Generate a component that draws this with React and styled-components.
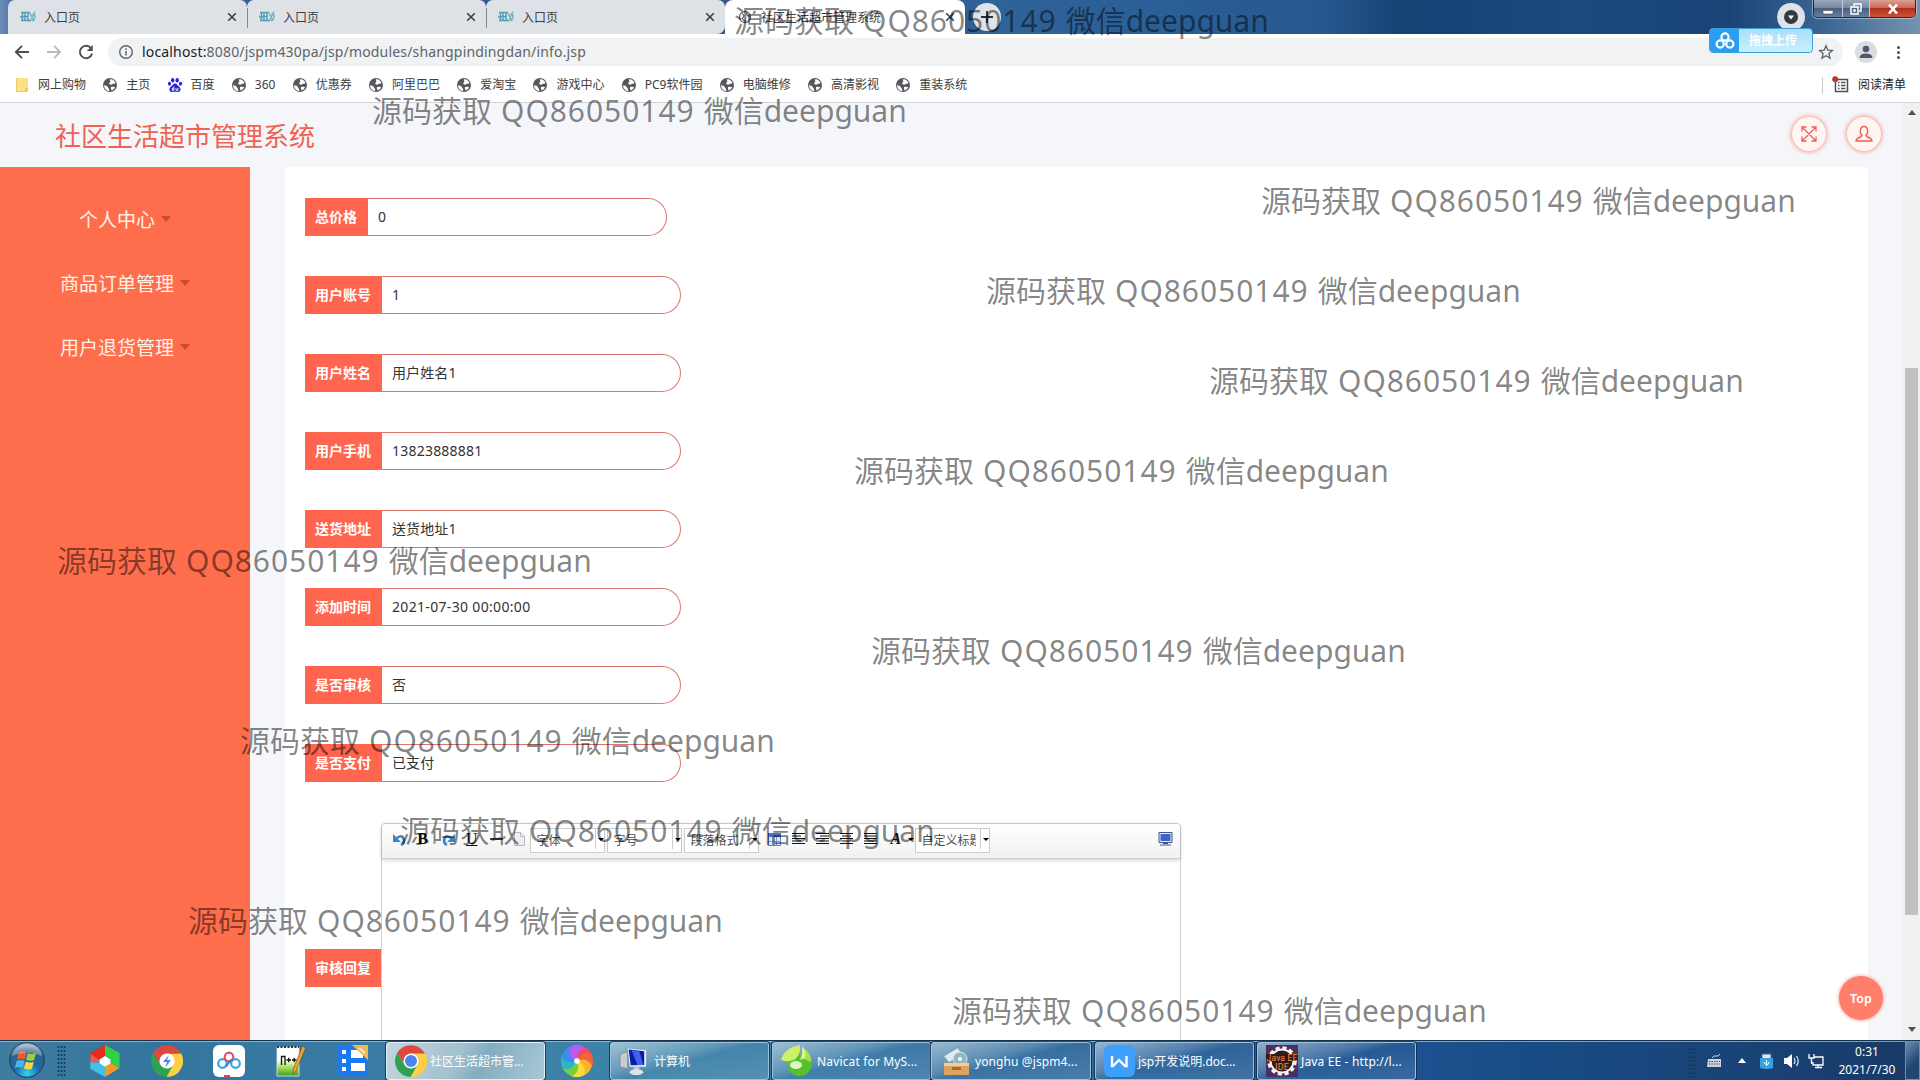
import React from "react";
import styled, { createGlobalStyle, css } from "styled-components";

const Global = createGlobalStyle`
  * { box-sizing: border-box; }
  html, body { margin: 0; padding: 0; overflow: hidden; }
  body { font-family: "Noto Sans", "Noto Sans CJK SC", sans-serif; font-size: 14px; color: #333; }
  svg { display: block; flex: none; }
`;

const Screen = styled.div`
  position: relative;
  width: 1920px;
  height: 1080px;
  overflow: hidden;
  display: flex;
  flex-direction: column;
  background: #fff;
`;

/* ---------- browser chrome ---------- */
const TabStrip = styled.div`
  height: 34px;
  flex: none;
  display: flex;
  padding-left: 8px;
  background: linear-gradient(90deg, #6d8db6 0, #3b6299 1%, #35568f 40%, #2f6296 52%, #2a5f97 60%, #27588f 69%, #164274 73%, #1a4a7f 82%, #1b4376 90%, #3a6692 95%, #7593ae 100%);
`;
const Tab = styled.div`
  width: ${(p) => (p.$active ? 240 : 239)}px;
  height: 34px;
  display: flex;
  align-items: center;
  padding: 0 10px 0 12px;
  gap: 8px;
  font-size: 12px;
  color: #3c4043;
  white-space: nowrap;
  background: ${(p) => (p.$active ? "#fff" : "#dee1e6")};
  border-radius: ${(p) => (p.$active ? "8px 8px 0 0" : "7px 7px 0 0")};
  ${(p) => p.$last && css`border-radius: 7px 7px 8px 0;`}
`;
const TabTitle = styled.span`
  flex: 1;
  line-height: 34px;
  padding-top: 1px;
`;
const TabDivider = styled.div`
  width: 1px;
  height: 20px;
  margin: 8px -1px 0 0;
  background: #85898f;
  z-index: 1;
`;
const NewTab = styled.div`
  width: 28px;
  height: 28px;
  margin: 3px 0 0 8px;
  border-radius: 50%;
  background: #dee3ea;
  display: flex;
  align-items: center;
  justify-content: center;
`;
const StripEnd = styled.div`
  margin-left: auto;
  display: flex;
  padding-right: 4px;
`;
const TabSearch = styled(NewTab)`
  margin: 3px 8px 0 0;
`;
const WindowButtons = styled.div`
  display: flex;
  height: 18px;
  border: 1px solid #1d2c42;
  border-top: 0;
  border-radius: 0 0 5px 5px;
  overflow: hidden;
  box-shadow: 0 0 1px 1px rgba(255,255,255,.45);
`;
const WindowButton = styled.div`
  width: ${(p) => p.$w}px;
  display: flex;
  align-items: center;
  justify-content: center;
  border-left: ${(p) => (p.$first ? "0" : "1px solid #c3ccd8")};
  background: ${(p) =>
    p.$close
      ? "linear-gradient(#d9a094 0, #cb6a58 45%, #b1301d 50%, #c9543a 100%)"
      : "linear-gradient(#9aa9bc 0, #7588a2 45%, #4a6080 50%, #67809f 100%)"};
`;
const Toolbar = styled.div`
  height: 35px;
  flex: none;
  display: flex;
  align-items: center;
  padding: 1px 0 0 14px;
  background: #fff;
`;
const NavIcons = styled.div`
  display: flex;
  gap: 16px;
  width: 94px;
`;
const AddressBar = styled.div`
  width: 1735px;
  height: 28px;
  border-radius: 14px;
  background: #f0f2f4;
  display: flex;
  align-items: center;
  padding: 0 9px 0 10px;
  gap: 8px;
`;
const Url = styled.span`
  flex: 1;
  font-size: 14px;
  line-height: 28px;
  color: #5f6368;
  letter-spacing: 0.17px;
  b { font-weight: 400; color: #202124; }
`;
const Avatar = styled.div`
  width: 22px;
  height: 22px;
  margin-left: 12px;
  border-radius: 50%;
  background: #dadee4;
  overflow: hidden;
`;
const Dots = styled.div`
  width: 3px;
  margin-left: 20px;
  display: grid;
  gap: 2px;
  i { width: 3px; height: 3px; border-radius: 50%; background: #4b4f54; }
`;
const Bookmarks = styled.div`
  height: 34px;
  flex: none;
  display: flex;
  align-items: center;
  gap: 16.25px;
  padding: 0 14px 1px 14px;
  font-size: 12px;
  color: #3c4043;
  background: #fff;
  border-bottom: 1px solid #d3d5d9;
`;
const Bookmark = styled.div`
  display: flex;
  align-items: center;
  gap: 8px;
  white-space: nowrap;
  line-height: 18px;
`;
const ReadingList = styled(Bookmark)`
  margin-left: auto;
  border-left: 1px solid #c8cbd0;
  padding-left: 9px;
  height: 17px;
  color: #222;
`;
const UploadBadge = styled.div`
  position: absolute;
  left: 1709px;
  top: 28px;
  width: 104px;
  height: 25px;
  display: flex;
  border: 1px solid #3f9fd8;
  border-radius: 4px;
  overflow: hidden;
  background: linear-gradient(#a9dff9, #c8f1fd);
  color: #fff;
  font-size: 12px;
  font-weight: 700;
  line-height: 23px;
`;
const UploadIcon = styled.div`
  width: 29px;
  background: #2b9df4;
  display: flex;
  align-items: center;
  justify-content: center;
  margin-right: 10px;
`;

/* ---------- page ---------- */
const Page = styled.div`
  height: 937px;
  flex: none;
  display: flex;
  background: #f4f6fa;
`;
const PageMain = styled.div`
  width: 1903px;
  display: flex;
  flex-direction: column;
`;
const PageHeader = styled.header`
  height: 64px;
  display: flex;
  align-items: center;
  padding: 0 22px 0 55px;
  gap: 21px;
`;
const SiteTitle = styled.h1`
  margin: 1px auto 0 0;
  font-size: 26px;
  font-weight: 400;
  line-height: 40px;
  color: #ef6353;
`;
const RoundButton = styled.div`
  width: 34px;
  height: 34px;
  margin-top: -2px;
  border-radius: 50%;
  background: #fff6f3;
  box-shadow: 0 0 4px 1px #fb9c8f;
  display: flex;
  align-items: center;
  justify-content: center;
`;
const Body = styled.div`
  height: 873px;
  display: flex;
`;
const Sidebar = styled.nav`
  width: 250px;
  background: #ff6e4c;
  padding-top: 21px;
`;
const MenuItem = styled.div`
  height: 64px;
  display: flex;
  align-items: center;
  justify-content: center;
  gap: 6px;
  font-size: 19px;
  line-height: 64px;
  color: #fff3ea;
`;
const MenuCaret = styled.i`
  margin-top: -2px;
  border: 5.5px solid transparent;
  border-top: 6px solid #c4502f;
  border-bottom: 0;
`;
const Card = styled.main`
  width: 1583px;
  margin-left: 35px;
  background: #fff;
  padding: 31px 0 0 20px;
  overflow: hidden;
`;
const Gutter = styled.div`
  flex: 1;
  background: #f4f6fa;
`;
const Field = styled.div`
  display: flex;
  height: 38px;
  margin-bottom: 40px;
`;
const Label = styled.div`
  height: 38px;
  padding: 0 ${(p) => (p.$tight ? 10 : 11)}px 0 10px;
  font-size: 14px;
  font-weight: 700;
  line-height: 37px;
  color: #fff;
  background: #ff654f;
  white-space: nowrap;
`;
const Value = styled.div`
  width: 299px;
  height: 38px;
  padding-left: 10px;
  border: 1px solid #d9776d;
  border-left: 0;
  border-radius: 0 20px 20px 0;
  line-height: 36px;
  color: #333;
  letter-spacing: ${(p) => p.$ls}px;
`;
const EditorField = styled.div`
  display: flex;
  align-items: center;
  height: 293px;
  margin-top: -1px;
`;
const Editor = styled.div`
  width: 800px;
  height: 291px;
  margin-top: 2px;
  border: 1px solid #d0d0d0;
  border-radius: 4px 4px 0 0;
  background: #fff;
`;
const EditorBar = styled.div`
  height: 35px;
  display: flex;
  align-items: flex-start;
  padding: 4px 7px 0 10px;
  border-bottom: 1px solid #cfcfcf;
  border-radius: 4px 4px 0 0;
  background: linear-gradient(#fff, #f1f1f1);
  box-shadow: 0 1px 4px rgba(0,0,0,.2);
`;
const Tool = styled.div`
  width: ${(p) => p.$w || 24.3}px;
  height: 22px;
  display: flex;
  align-items: center;
  padding-left: 1px;
  font: ${(p) => p.$font || "700 16px 'Liberation Serif', serif"};
  color: #111;
  text-decoration: ${(p) => (p.$under ? "underline" : "none")};
`;
const ScreenTool = styled(Tool)`
  margin-left: auto;
  padding-left: 9px;
`;
const Combo = styled.div`
  width: 75px;
  height: 25px;
  margin-right: 2px;
  padding-left: 5px;
  display: flex;
  flex: none;
  border: 1px solid #ccc;
  background: #fff;
  font-size: 12px;
  line-height: 23px;
  color: #4d4d4d;
  white-space: nowrap;
`;
const ComboText = styled.span`
  width: 55px;
  margin-right: 4px;
  overflow: hidden;
`;
const ComboArrow = styled.span`
  height: 20px;
  width: 9px;
  border-left: 1px solid #ccc;
  display: flex;
  align-items: center;
  padding-left: 2px;
`;
const SmallCaret = styled.i`
  border: 3px solid transparent;
  border-top: 3.5px solid #000;
  border-bottom: 0;
`;
const ScrollTrack = styled.div`
  width: 17px;
  display: flex;
  flex-direction: column;
  align-items: center;
  justify-content: space-between;
  padding: 7px 0 8px;
  background: #f1f1f1;
`;
const ScrollArrow = styled.i`
  border: 4px solid transparent;
  ${(p) =>
    p.$down
      ? css`border-top: 5px solid #505050; border-bottom: 0;`
      : css`border-bottom: 5px solid #505050; border-top: 0;`}
`;
const ScrollThumb = styled.div`
  width: 13px;
  height: 547px;
  margin-bottom: auto;
  margin-top: 253px;
  background: #c1c1c1;
`;
const TopButton = styled.div`
  position: absolute;
  left: 1839px;
  top: 976px;
  width: 44px;
  height: 44px;
  border-radius: 50%;
  background: #ff7e6c;
  box-shadow: 0 0 3px 1px #ffb9ad;
  color: #fff;
  font-size: 12.5px;
  font-weight: 600;
  line-height: 45px;
  text-align: center;
`;

/* ---------- taskbar ---------- */
const Taskbar = styled.footer`
  height: 40px;
  flex: none;
  display: flex;
  border-top: 1px solid #17324c;
  box-shadow: inset 0 1px 0 rgba(190,220,235,.6);
  background: linear-gradient(90deg, #3f7d9f 0, #33759d 8%, #3a7ba5 18%, #3e84a8 35%, #3777a5 45%, #2a6299 60%, #1b5290 73%, #184a83 82%, #1a4274 92%, #173a66 100%);
`;
const Orb = styled.div`
  width: 57px;
  padding: 1px 0 0 9px;
`;
const Grip = styled.div`
  width: 9px;
  height: 32px;
  margin-top: 4px;
  background: radial-gradient(circle, #173a58 0.9px, transparent 1.2px) 0 0 / 3px 4px;
`;
const Pins = styled.div`
  width: 320px;
  display: flex;
  align-items: center;
  gap: 30px;
  padding-left: 23px;
`;
const TaskSlot = styled.div`
  width: 65px;
  display: flex;
  align-items: center;
  justify-content: center;
  padding-right: 2px;
`;
const TaskButton = styled.div`
  width: ${(p) => p.$w || 159}px;
  height: 38px;
  margin: 1px ${(p) => p.$gap ?? 3}px 0 0;
  padding-left: ${(p) => p.$pad ?? 8}px;
  display: flex;
  align-items: center;
  gap: ${(p) => p.$space ?? 4}px;
  font-size: 12px;
  line-height: 35px;
  color: #fff;
  white-space: nowrap;
  letter-spacing: ${(p) => p.$ls || 0}px;
  border: 1px solid ${(p) => (p.$active ? "#e2eff5" : "#9cc0d8")};
  border-radius: 3px;
  box-shadow: 0 0 0 1px rgba(12,38,66,.75);
  background: ${(p) =>
    p.$active
      ? "linear-gradient(115deg, #c5d6df 0, #a2c0ce 45%, #83adbf 60%, #a8c8d6 100%)"
      : "linear-gradient(165deg, rgba(255,255,255,.5) 0, rgba(255,255,255,.2) 38%, rgba(255,255,255,.04) 50%, rgba(255,255,255,.14) 100%)"};
`;
const Tray = styled.div`
  margin-left: auto;
  display: flex;
  align-items: center;
`;
const TrayIcons = styled.div`
  display: flex;
  align-items: center;
  width: 140px;
  padding-left: 9px;
  gap: 11px;
  svg:nth-child(2) { margin-left: 4px; }
  svg:nth-child(3) { margin-left: 3px; }
  svg:nth-child(5) { margin-left: -3px; }
`;
const Clock = styled.div`
  width: 60px;
  margin: 0 8px 0 0;
  font-size: 12px;
  line-height: 18px;
  text-align: center;
  color: #fff;
  white-space: nowrap;
`;
const ShowDesktop = styled.div`
  width: 15px;
  height: 39px;
  border: 1px solid #6f8fb0;
  background: linear-gradient(135deg, #6d8cae, #21466f 60%);
`;

/* ---------- watermark ---------- */
const Watermark = styled.div`
  position: absolute;
  font-size: 30px;
  line-height: 40px;
  color: rgba(0, 0, 0, 0.49);
  white-space: nowrap;
  word-spacing: 1.2px;
  pointer-events: none;
  span { letter-spacing: 0.95px; }
`;

/* ---------- icons ---------- */
const Globe = () => (
  <svg width="16" height="16" viewBox="0 0 16 16">
    <circle cx="8" cy="8" r="7" fill="#55595e" />
    <path d="M2.2 8.2c1.6.2 3 .6 3.400 1.800.3 1 1.500.8 1.300 2.200-.1.700.2 1.300.6 1.900C4 13.700 1.900 11 2.200 8.200z M8 2.400c2.700-.3 4.900 1.600 5.500 3.700-.9 1.200-2.500.3-3.300 1.100-.9.900-2.700.4-3-.6C6.900 5.600 8.600 5.300 8.300 4.200 8.200 3.500 7.600 3 8 2.400z M9.200 10.100c1.400-.6 3.200-.4 3.900.2-.6 1.500-1.800 2.600-3.300 3.100C9 12.500 8.500 10.900 9.200 10.100z" fill="#fff" />
  </svg>
);
const Folder = () => (
  <svg width="16" height="16" viewBox="0 0 16 16">
    <path d="M2 1h12v12l-1 2H2z" fill="#ffe08a" />
    <path d="M11 15v-3.500q1.500-1.500 3-1V14z" fill="#f2c750" />
    <path d="M2.500 1v13.500h10" stroke="#edca6a" fill="none" />
  </svg>
);
const Paw = () => (
  <svg width="16" height="16" viewBox="0 0 16 16" fill="#2326d6">
    <ellipse cx="5.700" cy="3.200" rx="1.700" ry="2.200" />
    <ellipse cx="10.200" cy="3.200" rx="1.700" ry="2.200" />
    <ellipse cx="2.500" cy="6.700" rx="1.600" ry="2" />
    <ellipse cx="13.500" cy="6.700" rx="1.600" ry="2" />
    <path d="M8 6.500c2 0 2.500 2 4.200 3.200 2.600 2 1.200 5.300-1.200 5.200-2-.2-4-.2-6 0-2.400.1-3.800-3.200-1.200-5.200C5.500 8.500 6 6.500 8 6.500z" />
    <path d="M6.800 9.500v3.800H5.200v-2h1.600M9 11v2.300h2V11" stroke="#fff" fill="none" strokeWidth=".9" />
  </svg>
);
const Favicon = () => (
  <svg width="16" height="14" viewBox="0 0 16 14" fill="none" stroke="#4f9db2" strokeWidth="1.400">
    <path d="M1 2.500h9M2.500 2.500v8M5 3v7M8 2.500v8M1 10.500h9M0 6l2 2M3 6.500h5" />
    <path d="M10 3l4 8M15 1.500l-5 10M12.500 4q3 0 2.500 3t-3 4" stroke="#6fb2c1" />
  </svg>
);
const SiteGlobe = () => (
  <svg width="16" height="16" viewBox="0 0 16 16" fill="none" stroke="#5f6368" strokeWidth="1.300">
    <circle cx="8" cy="8" r="5.500" />
    <path d="M5 4.500q3 2 1 4T9 12M10 3.500q-1 3 3 4" />
  </svg>
);
const Cross = () => (
  <svg width="10" height="10" viewBox="0 0 10 10" stroke="#3c4043" strokeWidth="1.600">
    <path d="M1.200 1.200l7.600 7.600M8.800 1.200L1.200 8.800" />
  </svg>
);
const Arrow = ({ back }) => (
  <svg width="16" height="16" viewBox="0 0 16 16" fill="none" stroke={back ? "#4c5055" : "#b9bcc0"} strokeWidth="1.900">
    {back ? <path d="M15 8H2.500M8 1.800L1.800 8L8 14.200" /> : <path d="M1 8h12.500M8 1.800L14.200 8L8 14.200" />}
  </svg>
);
const Reload = () => (
  <svg width="16" height="16" viewBox="0 0 16 16">
    <path d="M13 4.200A6.200 6.200 0 1 0 14.100 9.500" fill="none" stroke="#4c5055" strokeWidth="1.900" />
    <path d="M14.800 1v6H8.800z" fill="#4c5055" />
  </svg>
);
const Info = () => (
  <svg width="16" height="16" viewBox="0 0 16 16">
    <circle cx="8" cy="8" r="6.300" fill="none" stroke="#5f6368" strokeWidth="1.400" />
    <path d="M8 7v4.500M8 4.300v1.600" stroke="#5f6368" strokeWidth="1.500" />
  </svg>
);
const Star = () => (
  <svg width="16" height="16" viewBox="0 0 16 16">
    <path d="M8 1.800l1.800 4.300 4.600.4-3.500 3 1.100 4.600L8 11.700l-4 2.400 1.100-4.600-3.500-3 4.600-.4z" fill="none" stroke="#5f6368" strokeWidth="1.300" />
  </svg>
);
const Chrome = ({ size = 32, bolt }) => (
  <svg width={size} height={size} viewBox="0 0 32 32">
    <path d="M16 16L16 32A16 16 0 0 0 29.860 8z" fill="#fccf45" />
    <path d="M16 8.500H29.500L22.500 19.700L16 32L14 24z" fill="#fccf45" />
    <path d="M2.140 8L9.500 19.500L16 23.500L22.500 19.500L15.500 32A16 16 0 0 1 2.140 8z" fill="#2da24f" />
    <path d="M2.140 8A16 16 0 0 1 29.860 8.500H16L9.500 19.500z" fill="#db4a3c" />
    <circle cx="16" cy="16" r="7.600" fill="#fff" />
    {bolt ? <path d="M18 10l-6 7h4l-2 6 6-8h-4z" fill="#4c86ee" /> : <circle cx="16" cy="16" r="6" fill="#4c86ea" />}
  </svg>
);
const Windows = () => (
  <svg width="36" height="36" viewBox="0 0 36 36">
    <defs>
      <radialGradient id="orb" cx=".5" cy=".9" r=".9">
        <stop offset="0" stopColor="#37d4f5" /><stop offset=".4" stopColor="#1a6ba6" /><stop offset=".75" stopColor="#315f86" /><stop offset="1" stopColor="#b5cad8" />
      </radialGradient>
    </defs>
    <circle cx="18" cy="18" r="17.300" fill="url(#orb)" stroke="#1c3a58" />
    <path d="M9.500 11q4-2.500 8-.5l-1.700 7q-4-1.800-8 .3z" fill="#ee5b2c" />
    <path d="M18.800 11q4 2 8.200 0l-1.900 7q-4 1.800-8-.2z" fill="#9bd03f" />
    <path d="M7.500 19.200q4-2.200 8-.3l-1.700 7q-4-1.800-8 .3z" fill="#4fb2ec" />
    <path d="M16.800 19.500q4 2 8 .2l-1.900 7q-4 1.800-8-.2z" fill="#fcd53d" />
    <path d="M3 14a15.500 15.500 0 0 1 30 0q-15-7-30 0z" fill="#fff" opacity=".3" />
  </svg>
);
const Cube = () => (
  <svg width="32" height="32" viewBox="0 0 32 32">
    <path d="M16 0v11l-5.500 3.500L1.500 20V8z" fill="#e8291c" />
    <path d="M16 0l14.500 8v15L21.500 18v-3.500L16 11z" fill="#2fd245" />
    <path d="M1.500 9l9 6v3.500L1.500 24z" fill="#f4e9e2" opacity=".25" />
    <path d="M1.500 17l9 1.500L16 21v11L1.500 24z" fill="#45bfe9" />
    <path d="M30.500 23L16 32V21l5.500-3z" fill="#f59a24" />
    <path d="M16 11l5.500 3.500v4L16 21.500l-5.500-3v-4z" fill="#fff" />
  </svg>
);
const Cloud = () => (
  <svg width="32" height="32" viewBox="0 0 32 32">
    <rect width="32" height="32" rx="6" fill="#fff" />
    <circle cx="9.500" cy="18.500" r="4.300" fill="none" stroke="#36a5e0" strokeWidth="2.200" />
    <circle cx="22.500" cy="18.500" r="4.300" fill="none" stroke="#36a5e0" strokeWidth="2.200" />
    <circle cx="16" cy="12" r="4.300" fill="none" stroke="#e5506a" strokeWidth="2.200" />
    <path d="M12 21.500q2-1 4-4t4-3" fill="none" stroke="#3d7fd6" strokeWidth="2" />
    <path d="M11 31h6" stroke="#e5405c" strokeWidth="2" />
  </svg>
);
const Notepad = () => (
  <svg width="32" height="32" viewBox="0 0 32 32">
    <defs><linearGradient id="np" x2="0" y2="1"><stop offset=".45" stopColor="#fff" /><stop offset=".65" stopColor="#b6e86b" /><stop offset="1" stopColor="#3f9c1c" /></linearGradient></defs>
    <path d="M2 2h22v29H2z" fill="url(#np)" stroke="#e8efe8" strokeWidth=".8" />
    <path d="M2 2h22" stroke="#333" strokeWidth="2" strokeDasharray="2 1.500" />
    <path d="M6.500 20v-8.500h3.500V20M11.500 15h4.500M13.700 12.800v4.500M17 15h4.500M19.200 12.800v4.500" fill="none" stroke="#111" strokeWidth="1.300" />
    <path d="M27.500 1l3 2-9.500 23-3 3 .2-4.500z" fill="#eaa53c" stroke="#7b5418" strokeWidth=".7" />
  </svg>
);
const Tiles = () => (
  <svg width="32" height="32" viewBox="0 0 32 32">
    <rect x="1" width="30" height="31" fill="#1b79ee" />
    <path d="M5 5h4v4H5zM5 14h4v4H5zM5 22h4v4H5zM14 5h12v8H14zM14 18h14v8H14z" fill="#fff" />
    <path d="M15 0l16 15V0z" fill="#f0b854" />
    <path d="M22 3l6 5" stroke="#fff" strokeWidth="2" opacity=".7" />
  </svg>
);
const Pinwheel = () => (
  <svg width="32" height="32" viewBox="-16 -16 32 32">
    <circle r="15" fill="#d35ad0" />
    {["#f24d5e", "#f8613a", "#fbb12c", "#f6dc3c", "#74cf3c", "#2fb4c4", "#3b8cf5", "#b95cf0"].map((c, i) => (
      <path key={c} d="M0 0Q-7-8-1-15.500Q9-17 13-8.500Q4-10 0 0Z" fill={c} transform={`rotate(${i * 45 + 20})`} />
    ))}
    <circle r="2.800" fill="#fff" />
  </svg>
);
const Computer = () => (
  <svg width="31" height="32" viewBox="0 0 32 32">
    <path d="M1 9l8-3v18l-8-2z" fill="#c6ccd2" stroke="#7e868e" />
    <path d="M9 3l19 2v17L11 22z" fill="#e9edf2" />
    <path d="M10 4l16 2v14l-14 .5z" fill="#0b1aa8" />
    <path d="M13 5l8 1 4 14h-6z" fill="#3f62e8" />
    <path d="M15 22h6v4h-6z" fill="#bfc6cd" />
    <ellipse cx="18" cy="27.500" rx="7" ry="3" fill="#dfe4e8" />
  </svg>
);
const Navicat = () => (
  <svg width="32" height="32" viewBox="0 0 32 32">
    <circle cx="18.500" cy="19.500" r="11.800" fill="#55c22b" />
    <path d="M22 3q9 5 8 14l-9-4z" fill="#a8e04a" />
    <path d="M0 15Q3 3 19 0q1 13-8 15.500-5 1.500-11-.5z" fill="#cdf06a" />
    <path d="M21 1q5 6 3 12l-5 2q3-7 2-14z" fill="#dff59a" />
    <ellipse cx="15" cy="20" rx="6" ry="4" fill="#dff7c4" />
  </svg>
);
const Crate = () => (
  <svg width="27" height="32" viewBox="0 0 27 32">
    <path d="M0 11l15-9 5 8-14 8z" fill="#e5e8ea" stroke="#67a9bb" strokeWidth="1.500" />
    <circle cx="17" cy="14" r="7" fill="#93b6c4" stroke="#dae6ea" />
    <circle cx="17" cy="14" r="2" fill="#fff" />
    <path d="M1 18h25v12H1z" fill="#dda35c" />
    <path d="M1 18h25v3H1z" fill="#f3cf96" />
    <path d="M9 22h9v3H9z" fill="#a56d31" />
  </svg>
);
const Wps = () => (
  <svg width="33" height="32" viewBox="0 0 33 32">
    <rect x="1" width="31" height="32" rx="6" fill="#3ea0fb" />
    <path d="M9 11v10h1l6-6 6 6h1.500V11" fill="none" stroke="#fff" strokeWidth="2.400" />
  </svg>
);
const JavaIcon = () => (
  <svg width="32" height="32" viewBox="0 0 32 32">
    <rect width="32" height="32" fill="#4b2f5f" />
    <circle cx="16" cy="16" r="12.800" fill="none" stroke="#f2f2f2" strokeWidth="4" strokeDasharray="4 2.700" />
    <circle cx="16" cy="16" r="11.500" fill="#2e1b22" stroke="#f2f2f2" strokeWidth="2" />
    <rect y="9" width="32" height="7" fill="#33191c" />
    <text x="16" y="16" textAnchor="middle" fontSize="8.500" fontFamily="Roboto" fill="#ff8a2a">Java EE</text>
    <text x="16" y="24.500" textAnchor="middle" fontSize="9" fontFamily="Roboto" fill="#ff8a2a">IDE</text>
  </svg>
);
const Align = ({ kind }) => {
  const short = { l: [0, 9], r: [4, 13], c: [2, 11], j: [0, 13] }[kind];
  return (
    <svg width="14" height="12" viewBox="0 0 14 12" stroke="#111" strokeWidth="1">
      {[0.5, 3, 5.5, 8, 10.5].map((y, i) => (
        <path key={y} d={i % 2 ? `M${short[0]} ${y}H${short[1]}` : `M0 ${y}H13`} />
      ))}
    </svg>
  );
};
const Curl = ({ flip }) => (
  <svg width="13" height="13" viewBox="0 0 13 13">
    <g transform={flip ? "matrix(-1 0 0 1 13 0)" : undefined}>
      <path d="M3 5.500Q9 1 10.500 5.500T8 12" fill="none" stroke="#3d86cc" strokeWidth="2.600" />
      <path d="M0 1v8h8z" fill="#3d86cc" />
    </g>
  </svg>
);

/* ---------- data ---------- */
const bookmarks = [
  ["网上购物", Folder], ["主页", Globe], ["百度", Paw], ["360", Globe], ["优惠券", Globe], ["阿里巴巴", Globe],
  ["爱淘宝", Globe], ["游戏中心", Globe], ["PC9软件园", Globe], ["电脑维修", Globe], ["高清影视", Globe], ["重装系统", Globe],
];
const fields = [
  ["总价格", "0"], ["用户账号", "1"], ["用户姓名", "用户姓名1"], ["用户手机", "13823888881", 0.22],
  ["送货地址", "送货地址1"], ["添加时间", "2021-07-30 00:00:00", 0.33], ["是否审核", "否"], ["是否支付", "已支付"],
];
const marks = [
  [734, 21], [372, 111], [1261, 201], [986, 291], [1209, 381], [854, 471],
  [57, 561], [871, 651], [240, 741], [400, 831], [188, 921], [952, 1011],
];

const ComboBox = ({ text }) => (
  <Combo>
    <ComboText>{text}</ComboText>
    <ComboArrow><SmallCaret /></ComboArrow>
  </Combo>
);

export default function App() {
  return (
    <Screen>
      <Global />
      <TabStrip>
        {[0, 1, 2].map((i) => (
          <React.Fragment key={i}>
            {i > 0 && <TabDivider />}
            <Tab $last={i === 2}><Favicon /><TabTitle>入口页</TabTitle><Cross /></Tab>
          </React.Fragment>
        ))}
        <Tab $active><SiteGlobe /><TabTitle>社区生活超市管理系统</TabTitle><Cross /></Tab>
        <NewTab>
          <svg width="12" height="12" viewBox="0 0 12 12" stroke="#2c3035" strokeWidth="1.800"><path d="M6 0v12M0 6h12" /></svg>
        </NewTab>
        <StripEnd>
          <TabSearch>
            <svg width="14" height="14" viewBox="0 0 14 14"><circle cx="7" cy="7" r="7" fill="#35393e" /><path d="M4 5.500h6L7 9.500z" fill="#fff" /></svg>
          </TabSearch>
          <WindowButtons>
            <WindowButton $w={28} $first>
              <svg width="12" height="14" viewBox="0 0 12 14"><path d="M1 8.500h10v3.500H1z" fill="#fff" stroke="#445" strokeWidth=".6" /></svg>
            </WindowButton>
            <WindowButton $w={27}>
              <svg width="12" height="12" viewBox="0 0 12 12" fill="none" stroke="#fff" strokeWidth="1.500"><path d="M4 3V1h7v7H9M1 4h7v7H1zM4 7h1v1H4z" /></svg>
            </WindowButton>
            <WindowButton $w={46} $close>
              <svg width="12" height="10" viewBox="0 0 12 10" stroke="#fff" strokeWidth="2.600"><path d="M2 .5l8 9M10 .5l-8 9" /></svg>
            </WindowButton>
          </WindowButtons>
        </StripEnd>
      </TabStrip>
      <Toolbar>
        <NavIcons><Arrow back /><Arrow /><Reload /></NavIcons>
        <AddressBar>
          <Info />
          <Url><b>localhost:</b>8080/jspm430pa/jsp/modules/shangpindingdan/info.jsp</Url>
          <Star />
        </AddressBar>
        <Avatar>
          <svg width="22" height="22" viewBox="0 0 22 22" fill="#4f5a6a"><circle cx="11" cy="8" r="3.300" /><path d="M4.800 17v-1.500q1-3 6.200-3t6.200 3V17z" /></svg>
        </Avatar>
        <Dots><i /><i /><i /></Dots>
      </Toolbar>
      <Bookmarks>
        {bookmarks.map(([name, Icon]) => (
          <Bookmark key={name}><Icon />{name}</Bookmark>
        ))}
        <ReadingList>
          <svg width="18" height="18" viewBox="0 0 18 18">
            <path d="M3.500 3.500h12v12h-12z" fill="none" stroke="#4c5055" strokeWidth="1.500" />
            <path d="M6 6.500h1.500M9 6.500h4.500M6 9.500h1.500M9 9.500h4.500M6 12.500h1.500M9 12.500h4.500" stroke="#4c5055" strokeWidth="1.300" />
            <circle cx="3.200" cy="3.200" r="3" fill="#c5352f" />
          </svg>
          阅读清单
        </ReadingList>
      </Bookmarks>

      <Page>
        <PageMain>
          <PageHeader>
            <SiteTitle>社区生活超市管理系统</SiteTitle>
            <RoundButton>
              <svg width="16" height="16" viewBox="0 0 16 16" fill="none" stroke="#f0604f" strokeWidth="1.300"><path d="M1.500 1.500l13 13M14.500 1.500l-13 13M1 5.500V1h4.500M10.500 1H15v4.500M15 10.500V15h-4.500M5.500 15H1v-4.500" /></svg>
            </RoundButton>
            <RoundButton>
              <svg width="18" height="18" viewBox="0 0 18 18" fill="none" stroke="#f0604f" strokeWidth="1.400"><path d="M7.200 10.500C4.200 8 4.800 1.500 9 1.500s4.800 6.500 1.800 9c0 1.700 5.700 1.500 6.200 5.500H1c.5-4 6.200-3.800 6.200-5.500z" /></svg>
            </RoundButton>
          </PageHeader>
          <Body>
            <Sidebar>
              {["个人中心", "商品订单管理", "用户退货管理"].map((m) => (
                <MenuItem key={m}>{m}<MenuCaret /></MenuItem>
              ))}
            </Sidebar>
            <Card>
              {fields.map(([label, value, ls = 0.1]) => (
                <Field key={label}><Label>{label}</Label><Value $ls={ls}>{value}</Value></Field>
              ))}
              <EditorField>
                <Label $tight>审核回复</Label>
                <Editor>
                  <EditorBar>
                    <Tool><Curl /></Tool>
                    <Tool>B</Tool>
                    <Tool><Curl flip /></Tool>
                    <Tool $under $font="400 16px 'Liberation Serif', serif">U</Tool>
                    <Tool>
                      <svg width="13" height="2"><path d="M0 1h13" stroke="#111" strokeWidth="1.500" /></svg>
                    </Tool>
                    <Tool $w={17}>
                      <svg width="11" height="14" viewBox="0 0 11 14"><path d="M.5.5h6l4 4v9H.5zM6.500.5v4h4" fill="#eef0f3" stroke="#b5b8bd" /></svg>
                    </Tool>
                    <ComboBox text="字体" />
                    <ComboBox text="字号" />
                    <ComboBox text="段落格式" />
                    <Tool $w={30}>
                      <svg width="20" height="13" viewBox="0 0 20 13"><path d="M6.500.5h12v12h-12z" fill="#dfe9fa" stroke="#5c7fc4" /><path d="M6 0h13v4H6z" fill="#4672c9" /><path d="M6 8.500h13M10.500 4v9M14.500 4v9" stroke="#7c98d2" /></svg>
                    </Tool>
                    <Tool $w={24}><Align kind="l" /></Tool>
                    <Tool $w={24}><Align kind="r" /></Tool>
                    <Tool $w={24}><Align kind="c" /></Tool>
                    <Tool $w={26}><Align kind="j" /></Tool>
                    <Tool $w={18} $font="italic 700 16px 'Liberation Serif', serif">A</Tool>
                    <Tool $w={8}><SmallCaret /></Tool>
                    <ComboBox text="自定义标题" />
                    <ScreenTool $w={24}>
                      <svg width="15" height="14" viewBox="0 0 15 14"><path d="M1 .5h13v10H1z" fill="#e8ecf3" stroke="#3e5578" /><path d="M2.500 2h10v7h-10z" fill="#3f63cf" /><path d="M5 11.500h5M2 13h11" stroke="#3e5578" /></svg>
                    </ScreenTool>
                  </EditorBar>
                </Editor>
              </EditorField>
            </Card>
            <Gutter />
          </Body>
        </PageMain>
        <ScrollTrack>
          <ScrollArrow />
          <ScrollThumb />
          <ScrollArrow $down />
        </ScrollTrack>
      </Page>

      <Taskbar>
        <Orb><Windows /></Orb>
        <Grip />
        <Pins><Cube /><Chrome bolt /><Cloud /><Notepad /><Tiles /></Pins>
        <TaskButton $active $gap={0} $space={3}><Chrome />社区生活超市管...</TaskButton>
        <TaskSlot><Pinwheel /></TaskSlot>
        <TaskButton>
          <Computer />计算机
        </TaskButton>
        <TaskButton $gap={0} $ls={0.15}><Navicat />Navicat for MyS...</TaskButton>
        <TaskButton $w={160} $gap={4} $pad={11} $space={5} $ls={0.1}><Crate />yonghu @jspm4...</TaskButton>
        <TaskButton $pad={7} $space={2}><Wps />jsp开发说明.doc...</TaskButton>
        <TaskButton $space={3} $ls={0.15}><JavaIcon />Java EE - http://l...</TaskButton>
        <Tray>
          <Grip />
          <TrayIcons>
            <svg width="17" height="16" viewBox="0 0 17 16"><path d="M2 6h13v8H1z" fill="#ccd2d8" /><path d="M3 8.500h11M3 11h11" stroke="#556" strokeDasharray="1.500 1" /><path d="M6 5q2-3 4-2t4-2" stroke="#ccd2d8" fill="none" /></svg>
            <svg width="8" height="5" viewBox="0 0 8 5"><path d="M0 5l4-5 4 5z" fill="#fff" /></svg>
            <svg width="13" height="16" viewBox="0 0 13 16"><path d="M2 1h9v5H2z" fill="#dfe6ec" stroke="#567" /><path d="M0 5h13v10q-6 2-13 0z" fill="#34a3e2" /><path d="M6.500 7v6M4 9q0 2 2.500 2.500T9 9" stroke="#fff" fill="none" /></svg>
            <svg width="16" height="16" viewBox="0 0 16 16"><path d="M0 5h3l5-4v14l-5-4H0z" fill="#fff" /><path d="M10 5q2 3 0 6M12.500 3q3.500 5 0 10" stroke="#dfe8f0" fill="none" strokeWidth="1.200" /></svg>
            <svg width="16" height="16" viewBox="0 0 16 16" fill="none" stroke="#fff" strokeWidth="1.300"><path d="M6 4h9v8H5V9M7 14.500h7M10 12v2.500M1 1v4h5V1M3.500 5v6" /></svg>
          </TrayIcons>
          <Clock>0:31<br />2021/7/30</Clock>
          <ShowDesktop />
        </Tray>
      </Taskbar>

      <UploadBadge>
        <UploadIcon>
          <svg width="20" height="18" viewBox="0 0 20 18" fill="none" stroke="#fff" strokeWidth="2.200"><circle cx="10" cy="5" r="3.600" /><circle cx="5.200" cy="12" r="3.600" /><circle cx="14.800" cy="12" r="3.600" /></svg>
        </UploadIcon>
        拖拽上传
      </UploadBadge>
      <TopButton>Top</TopButton>
      {marks.map(([x, y]) => (
        <Watermark key={y} style={{ left: x, top: y - 20 }}>源码获取 <span>QQ86050149</span> 微信deepguan</Watermark>
      ))}
    </Screen>
  );
}
